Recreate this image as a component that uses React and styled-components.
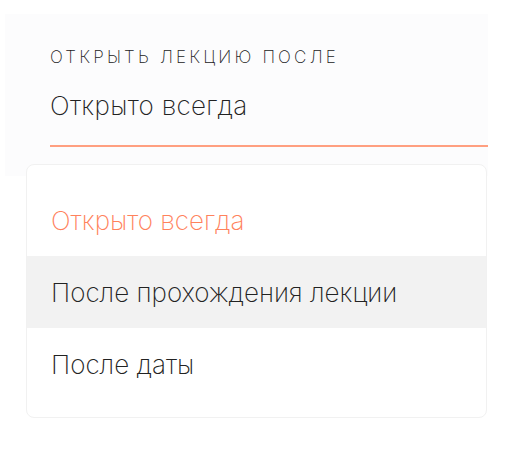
import React from 'react';
import styled, { createGlobalStyle } from 'styled-components';

const GlobalStyle = createGlobalStyle`
    body {
        margin: 0;
        background: #ffffff;
        font-family: Inter, "Noto Sans", sans-serif;
    }
`;

const Page = styled.div`
    padding: 14px 0 34px 5px;
`;

const Field = styled.div`
    box-sizing: border-box;
    width: 483px;
    height: 162px;
    padding: 33px 0 0 45px;
    background: #fcfcfd;
`;

const Label = styled.div`
    font-size: 17px;
    font-weight: 200;
    letter-spacing: 3.2px;
    line-height: 20px;
    color: #222222;
    text-transform: uppercase;
    white-space: nowrap;
`;

const Value = styled.div`
    margin-top: 25px;
    padding-bottom: 25px;
    font-size: 26px;
    font-weight: 200;
    letter-spacing: 0.3px;
    line-height: 28px;
    color: #222222;
    border-bottom: 2px solid #ff9f80;
`;

const Menu = styled.ul`
    position: relative;
    box-sizing: border-box;
    width: 461px;
    height: 254px;
    margin: -12px 0 0 21px;
    padding: 19px 0 0;
    list-style: none;
    background: #ffffff;
    border: 1px solid #f1f1f1;
    border-radius: 8px;
`;

const Option = styled.li`
    display: flex;
    align-items: center;
    height: 72px;
    padding-left: 24px;
    font-size: 26px;
    font-weight: 200;
    color: ${props => props.$selected ? '#ff825c' : '#222222'};
    background: ${props => props.$hovered ? '#f2f2f2' : 'transparent'};
`;

const options = ['Открыто всегда', 'После прохождения лекции', 'После даты'];

const App = () => {
    return (
        <Page>
            <GlobalStyle />
            <Field>
                <Label>Открыть лекцию после</Label>
                <Value>Открыто всегда</Value>
            </Field>
            <Menu>
                {options.map((el, i) => (
                    <Option key={i} $selected={i === 0} $hovered={i === 1}>{el}</Option>
                ))}
            </Menu>
        </Page>
    );
};

export default App;
